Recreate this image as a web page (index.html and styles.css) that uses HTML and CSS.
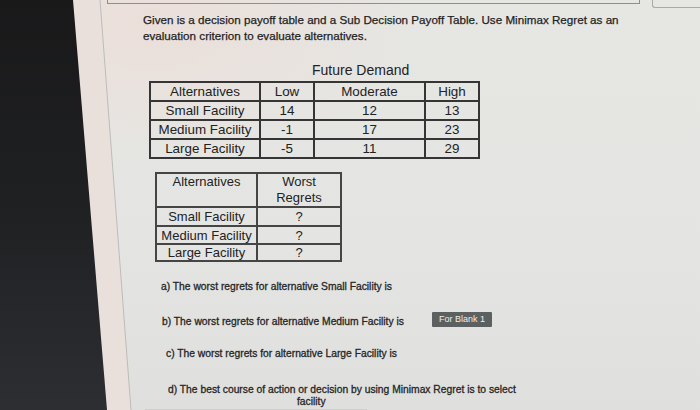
FILE: index.html
```html
<!DOCTYPE html>
<html>
<head>
<meta charset="utf-8">
<title>Minimax Regret</title>
<link rel="stylesheet" href="styles.css">
</head>
<body>
<div class="page">
  <svg class="bezel" width="140" height="410" viewBox="0 0 140 410">
    <defs>
      <linearGradient id="bz" x1="0" y1="0" x2="0" y2="1">
        <stop offset="0" stop-color="#19191a"/>
        <stop offset="0.5" stop-color="#1f2022"/>
        <stop offset="1" stop-color="#2d2e32"/>
      </linearGradient>
    </defs>
    <polygon points="73,0 100,0 131,410 107,410" fill="#e9e0dc"/>
    <polygon points="0,0 73,0 107,410 0,410" fill="url(#bz)"/>
    <line x1="100" y1="0" x2="131" y2="410" stroke="#bcbcbc" stroke-width="1"/>
  </svg>

  <div class="topbar">
    <div class="tb-left"></div>
    <div class="tb-right"></div>
  </div>

  <p class="intro">Given is a decision payoff table and a Sub Decision Payoff Table. Use Minimax Regret as an evaluation criterion to evaluate alternatives.</p>

  <div class="demand">Future Demand</div>
  <table class="grid payoff">
    <colgroup><col class="c1"><col class="c2"><col class="c3"><col class="c4"></colgroup>
    <tr><td>Alternatives</td><td>Low</td><td>Moderate</td><td>High</td></tr>
    <tr><td>Small Facility</td><td>14</td><td>12</td><td>13</td></tr>
    <tr><td>Medium Facility</td><td>-1</td><td>17</td><td>23</td></tr>
    <tr><td>Large Facility</td><td>-5</td><td>11</td><td>29</td></tr>
  </table>

  <table class="grid regret">
    <colgroup><col class="r1"><col class="r2"></colgroup>
    <tr class="head"><td class="top">Alternatives</td><td>Worst<br>Regrets</td></tr>
    <tr class="ra"><td>Small Facility</td><td>?</td></tr>
    <tr class="rb"><td>Medium Facility</td><td>?</td></tr>
    <tr class="rc"><td>Large Facility</td><td>?</td></tr>
  </table>

  <div class="questions">
    <p class="q qa">a) The worst regrets for alternative Small Facility is</p>
    <div class="q-row qb">
      <p class="q q-text">b) The worst regrets for alternative Medium Facility is</p>
      <span class="badge">For Blank 1</span>
    </div>
    <p class="q qc">c) The worst regrets for alternative Large Facility is</p>
    <p class="q qd">d) The best course of action or decision by using Minimax Regret is to select</p>
    <p class="q qf">facility</p>
    <div class="answer-box"></div>
  </div>
</div>
</body>
</html>
```

FILE: styles.css
```css
* { box-sizing: border-box; }

html, body {
  margin: 0;
  padding: 0;
}

body {
  width: 700px;
  height: 410px;
  overflow: hidden;
  font-family: "Liberation Sans", Arial, sans-serif;
  color: #252525;
}

.page {
  position: relative;
  width: 700px;
  height: 410px;
  overflow: hidden;
  background:
    radial-gradient(ellipse 260px 140px at 150px 20px, rgba(236, 222, 216, 0.9), rgba(236, 222, 216, 0) 100%),
    linear-gradient(180deg, #e6e6e3 0%, #e4e5e2 60%, #dfe0de 100%);
}

.bezel {
  position: absolute;
  left: 0;
  top: 0;
}

.topbar {
  display: flex;
  height: 8px;
}

.tb-left {
  margin-left: 107px;
  width: 533px;
  height: 4px;
  border: 1px solid #8e8e8c;
  border-top: none;
}

.tb-right {
  margin-left: 12px;
  flex: 1;
  height: 8px;
  border: 1px solid #a9a9a7;
  border-top: none;
  border-right: none;
  border-bottom-left-radius: 3px;
}

.intro {
  margin: 4px 0 0 143px;
  width: 520px;
  font-size: 11.65px;
  line-height: 16px;
  color: #1f1f1f;
  -webkit-text-stroke: 0.25px #1f1f1f;
}

.demand {
  margin: 18px 0 0 312px;
  font-size: 14px;
  line-height: 17px;
  color: #222;
}

.grid {
  border-collapse: collapse;
  table-layout: fixed;
  font-size: 13.4px;
  color: #222;
}

.grid td {
  border: 2px solid #353535;
  padding: 0;
  text-align: center;
  vertical-align: middle;
  line-height: 15px;
}

.payoff {
  margin: 2px 0 0 149px;
  width: 329px;
}

.payoff td { height: 19px; }

.payoff .c1 { width: 110px; }
.payoff .c2 { width: 54px; }
.payoff .c3 { width: 111px; }
.payoff .c4 { width: 54px; }

.regret {
  margin: 13px 0 0 155px;
  width: 185px;
  font-size: 13px;
}

.regret td { border-color: #454545; }

.regret .r1 { width: 101px; }
.regret .r2 { width: 84px; }

.regret .head td { height: 33px; line-height: 16px; }
.regret .head td.top { vertical-align: top; padding-top: 0; }
.regret .ra td { height: 19px; }
.regret .rb td { height: 18px; }
.regret .rc td { height: 17px; }

.questions {
  margin-left: 161px;
}

.q {
  margin: 0;
  font-size: 10.3px;
  line-height: 14px;
  color: #262626;
  -webkit-text-stroke: 0.3px #262626;
  white-space: nowrap;
}

.qa { margin-top: 18px; }

.q-row {
  display: flex;
  align-items: flex-start;
  margin-top: 18px;
}

.q-row .q-text {
  width: 270px;
  margin-top: 3px;
  margin-left: 1px;
}

.badge {
  display: block;
  width: 60px;
  height: 15px;
  background: #5c6061;
  color: #eceeee;
  font-size: 9px;
  line-height: 15px;
  text-align: center;
  border-radius: 1px;
}

.qc { margin: 18px 0 0 5px; }

.qd {
  margin: 23px 0 0 7px;
  line-height: 12px;
}

.qf {
  margin: 0 0 0 136px;
  line-height: 12px;
}

.answer-box {
  margin: 1px 0 0 -16px;
  width: 222px;
  height: 6px;
  border-top: 1px solid #cfd0cd;
  border-left: 1px solid #d3d4d1;
}
```
